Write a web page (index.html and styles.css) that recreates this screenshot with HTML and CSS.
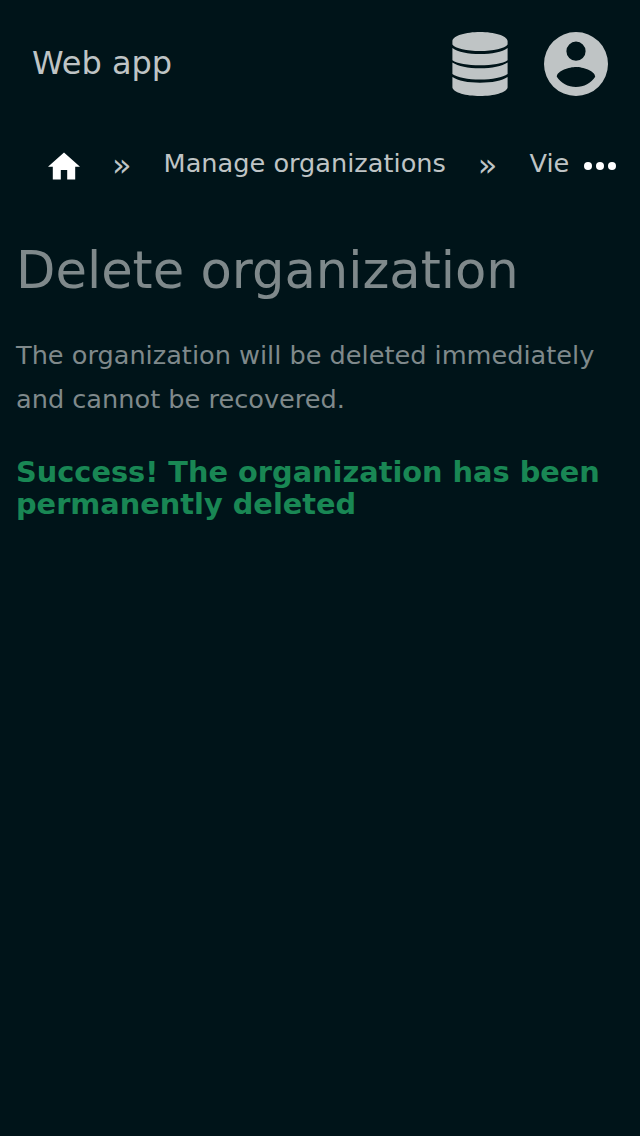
FILE: index.html
```html
<!DOCTYPE html>
<html lang="en">
<head>
<meta charset="utf-8">
<title>Delete organization</title>
<link rel="stylesheet" href="styles.css">
</head>
<body>
<header class="topbar">
  <span class="brand">Web app</span>
  <div class="actions">
    <svg class="icon-db" viewBox="0 0 56 64"><path d="M.4 9C1 3.500 14 0 28 0s27 3.500 27.600 9v3.500C53 16.500 41 19 28 19S3 16.500.4 12.500zM.4 16C6 20 16 22 28 22s22-2 27.600-6v12.300C51 31.500 40 33.300 28 33.300S5 31.500.4 28.300zM.4 30.500C6 34.300 16 36.300 28 36.300s22-2 27.600-5.800v11.500C51 45.500 40 47.600 28 47.600S5 45.500.4 42zM.4 45C6 48.800 16 50.700 28 50.700s22-1.900 27.600-5.700v10.500C54.500 60.500 42 64 28 64S1.500 60.500.4 55.500z"/></svg>
    <svg class="icon-user" viewBox="0 0 64 64"><path fill-rule="evenodd" d="M32 0a32 32 0 1 0 0 64a32 32 0 1 0 0-64zm0 9.600a9.600 9.600 0 1 1 0 19.200a9.600 9.600 0 1 1 0-19.200zm0 45.440c-8 0-15.070-4.100-19.200-10.300c.1-6.370 12.800-9.860 19.200-9.860s19.100 3.490 19.200 9.860c-4.130 6.200-11.200 10.300-19.200 10.300z"/></svg>
  </div>
</header>
<nav class="crumbs">
  <svg class="icon-home" viewBox="2 3 20 17"><path d="M10 20v-6h4v6h5v-8h3L12 3 2 12h3v8z"/></svg>
  <span class="sep">»</span>
  <span class="crumb">Manage organizations</span>
  <span class="sep">»</span>
  <span class="crumb">Vie</span>
  <svg class="icon-more" viewBox="0 0 32 8"><circle cx="4" cy="4" r="4"/><circle cx="16" cy="4" r="4"/><circle cx="28" cy="4" r="4"/></svg>
</nav>
<main class="content">
  <h1 class="title">Delete organization</h1>
  <p class="description">The organization will be deleted immediately and cannot be recovered.</p>
  <p class="success">Success! The organization has been permanently deleted</p>
</main>
</body>
</html>
```
FILE: styles.css
```css
* { box-sizing: border-box; }
body { margin: 0; min-height: 100vh; background: #001419; color: #bfc4c5; font-family: "DejaVu Sans", sans-serif; }
svg { display: block; flex: none; fill: currentColor; }
.topbar { height: 128px; padding: 0 32px; display: flex; align-items: center; justify-content: space-between; }
.brand { font-size: 32px; line-height: 38px; margin-bottom: 2px; }
.actions { display: flex; gap: 36px; }
.icon-db { width: 56px; height: 64px; }
.icon-user { width: 64px; height: 64px; }
.crumbs { height: 72px; padding: 0 24px 0 48px; display: flex; align-items: center; white-space: nowrap; font-size: 25.6px; line-height: 30px; }
.icon-home { width: 32px; height: 28px; margin-top: 4px; color: #fff; }
.sep { margin: 2px 32px 0; font-size: 32px; }
.crumb { flex: none; margin-bottom: 2px; }
.icon-more { width: 32px; height: 8px; margin: 4px 0 0 auto; color: #fff; }
.content { padding: 0 16px; }
.title { margin: 40px 0 0; font-size: 51.2px; line-height: 60px; font-weight: 400; color: #7f898b; }
.description { margin: 33px 0 0; font-size: 25.6px; line-height: 44px; color: #7f898b; }
.success { margin: 35px 0 0; font-size: 28.8px; line-height: 32px; font-weight: 700; color: #198754; }
```
